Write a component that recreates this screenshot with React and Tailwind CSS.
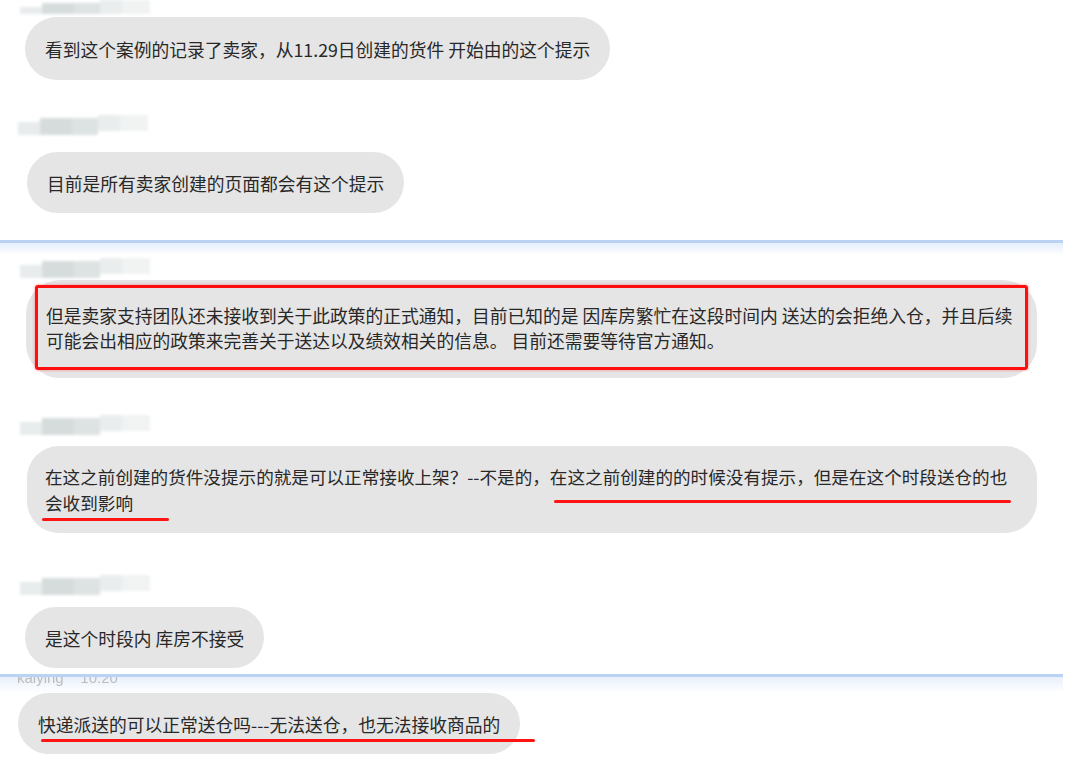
import React from 'react';

const font = { fontFamily: '"Noto Sans CJK SC", "Noto Sans", sans-serif' };

// blurred-out sender names
const NameBlur = ({ className = 'h-[20px]' }) => (
  <div className={`flex overflow-hidden blur-[1.5px] ${className}`}>
    <span className="mt-[7px] h-[13px] w-[22px] bg-[#e8ecec]" />
    <span className="mt-[3px] h-[17px] w-[32px] bg-[#d6dcdc]" />
    <span className="mt-[3px] h-[17px] w-[26px] bg-[#dde2e2]" />
    <span className="h-[16px] w-[22px] bg-[#e9eded]" />
    <span className="h-[16px] w-[28px] bg-[#f1f3f3]" />
  </div>
);

const Mark = ({ children, className }) => (
  <span className="relative inline-block">
    {children}
    <span className={`absolute h-[3px] rounded-full bg-[#ff1414] ${className}`} />
  </span>
);

const Separator = () => (
  <div className="w-[1063px]">
    <div className="h-[3px] bg-[#bad2f3]" />
  </div>
);

export default function App() {
  return (
    <div style={font} className="h-[775px] w-[1080px] overflow-hidden bg-white text-[17.75px] leading-[26px] text-[#282828]">
      <NameBlur className="ml-[20px] h-[14px]" />

      <div className="ml-[25px] mt-[3px] w-fit whitespace-nowrap rounded-[32px] bg-[#e5e5e5] px-5 py-[18.5px]">
        看到这个案例的记录了卖家，从11.29日创建的货件 开始由的这个提示
      </div>

      <NameBlur className="ml-[18px] mt-[35px] h-[22px]" />

      <div className="ml-[27px] mt-[15px] w-fit whitespace-nowrap rounded-[31px] bg-[#e5e5e5] px-5 py-[17.5px]">
        目前是所有卖家创建的页面都会有这个提示
      </div>

      <div className="mt-[27px]">
        <Separator />
        <div className="h-[12px] w-[1063px] bg-gradient-to-b from-[#e4eefb] to-white" />
      </div>

      <NameBlur className="ml-[20px] mt-[3px] h-[20px]" />

      <div className="ml-[26px] mt-[2px] w-[1011px] rounded-[34px] bg-[#e5e5e5] pb-[8px] pl-[9px] pr-[9px] pt-[5px]">
        <div className="rounded-[3px] border-[3px] border-[#ff1010] pb-[14px] pl-[8px] pt-[15px] leading-[25px] shadow-[0_0_3px_rgba(255,0,0,0.45)]">
          <div className="whitespace-nowrap">
            但是卖家支持团队还未接收到关于此政策的正式通知，目前已知的是 因库房繁忙在这段时间内 送达的会拒绝入仓，并且后续
          </div>
          <div className="whitespace-nowrap">
            可能会出相应的政策来完善关于送达以及绩效相关的信息。 目前还需要等待官方通知。
          </div>
        </div>
      </div>

      <NameBlur className="ml-[20px] mt-[37px] h-[20px]" />

      <div className="ml-[27px] mt-[11px] w-[1010px] rounded-[32px] bg-[#e5e5e5] px-[18px] py-[17.5px] text-[17.6px]">
        <div className="whitespace-nowrap">
          在这之前创建的货件没提示的就是可以正常接收上架？--不是的，
          <Mark className="-right-[4px] left-[4px] top-[calc(100%+10px)]">
            在这之前创建的的时候没有提示，但是在这个时段送仓的也
          </Mark>
        </div>
        <div className="whitespace-nowrap">
          <Mark className="-left-[3px] -right-[36px] top-[calc(100%+2px)]">会收到影响</Mark>
        </div>
      </div>

      <NameBlur className="ml-[20px] mt-[42px] h-[20px]" />

      <div className="ml-[25px] mt-[12px] w-fit whitespace-nowrap rounded-[31px] bg-[#e5e5e5] px-5 py-[17.5px]">
        是这个时段内 库房不接受
      </div>

      <div className="mt-[6px]">
        <Separator />
        <div className="h-[16px] w-[1063px] overflow-hidden bg-gradient-to-b from-[#e8f0fb] to-white">
          <div className="-mt-[9px] ml-[17px] text-[15px] leading-[20px] text-[#bdbdbd] blur-[0.6px]" style={{ fontFamily: '"Liberation Sans", sans-serif' }}>
            kaiying&nbsp;&nbsp;&nbsp;&nbsp;10:20
          </div>
        </div>
      </div>

      <div className="ml-[18px] w-fit whitespace-nowrap rounded-[31px] bg-[#e5e5e5] px-5 py-[17.5px]">
        <Mark className="-right-[35px] left-[3px] top-[calc(100%+2px)]">
          快递派送的可以正常送仓吗---无法送仓，也无法接收商品的
        </Mark>
      </div>
    </div>
  );
}
